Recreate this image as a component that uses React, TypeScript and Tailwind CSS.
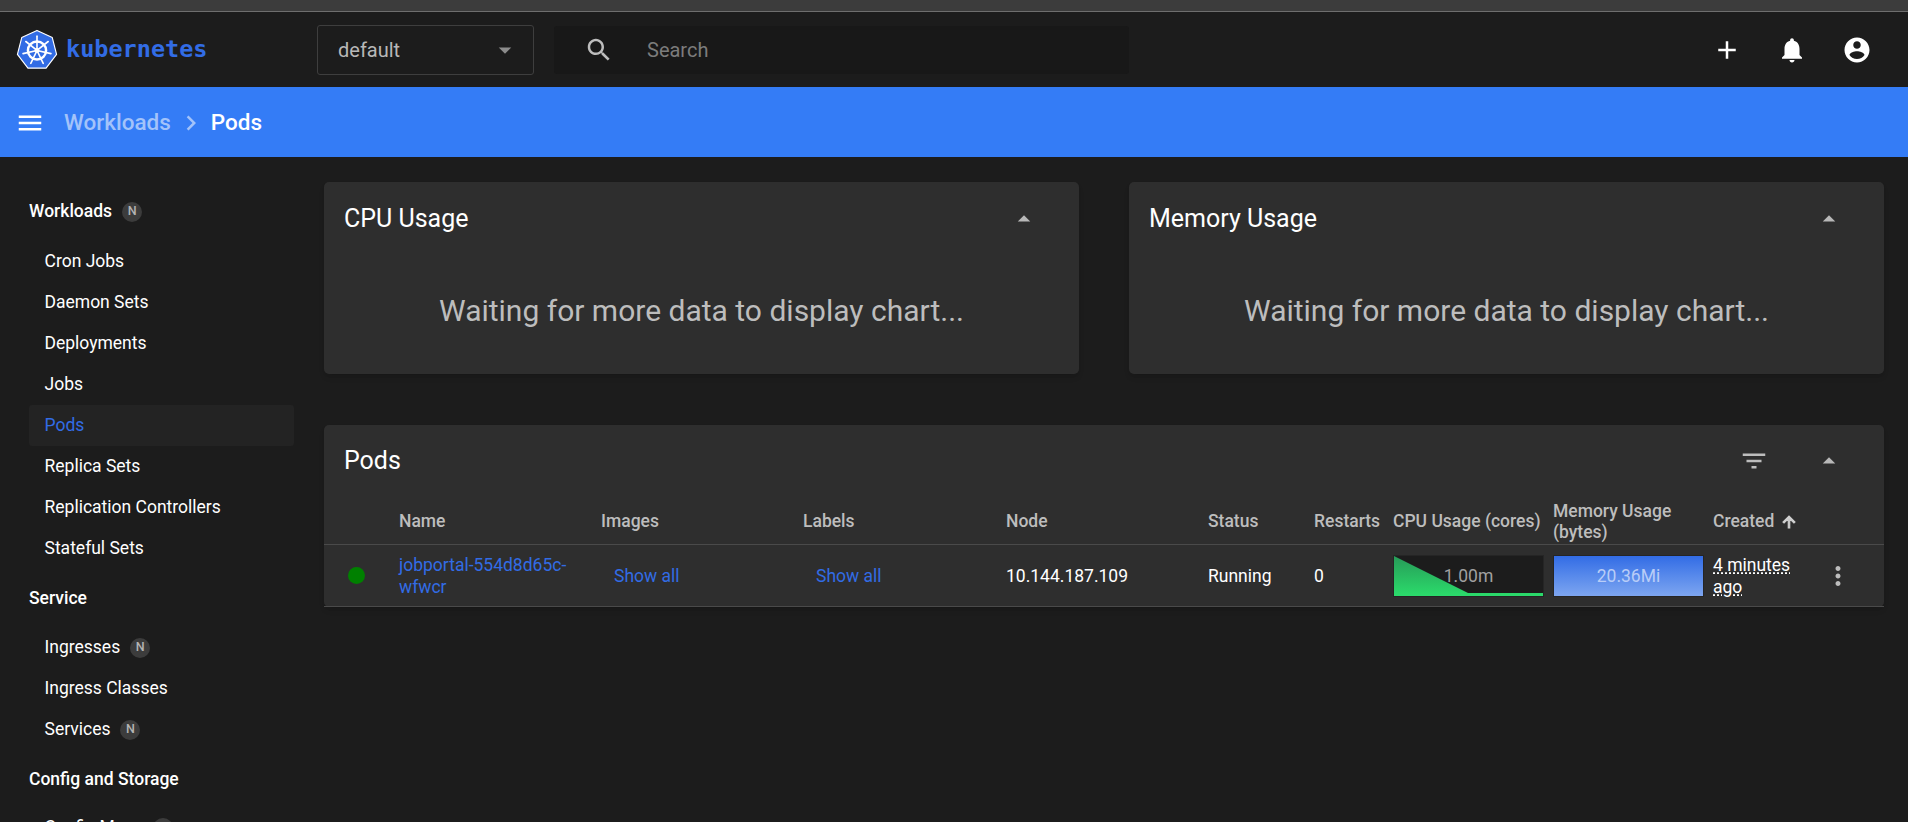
const ICONS = {
  add: "M19 13h-6v6h-2v-6H5v-2h6V5h2v6h6v2z",
  bell: "M12 22c1.1 0 2-.9 2-2h-4c0 1.1.89 2 2 2zm6-6v-5c0-3.07-1.64-5.64-4.5-6.32V4c0-.83-.67-1.5-1.5-1.5s-1.5.67-1.5 1.5v.68C7.63 5.36 6 7.92 6 11v5l-2 2v1h16v-1l-2-2z",
  account: "M12 2C6.48 2 2 6.48 2 12s4.48 10 10 10 10-4.48 10-10S17.52 2 12 2zm0 3c1.66 0 3 1.34 3 3s-1.34 3-3 3-3-1.34-3-3 1.34-3 3-3zm0 14.2c-2.5 0-4.71-1.28-6-3.22.03-1.99 4-3.08 6-3.08 1.99 0 5.97 1.09 6 3.08-1.29 1.94-3.5 3.22-6 3.22z",
  search: "M15.5 14h-.79l-.28-.27C15.41 12.59 16 11.11 16 9.5 16 5.91 13.09 3 9.5 3S3 5.91 3 9.5 5.91 16 9.5 16c1.61 0 3.09-.59 4.23-1.57l.27.28v.79l5 4.99L20.49 19l-4.99-5zm-6 0C7.01 14 5 11.99 5 9.5S7.01 5 9.5 5 14 7.01 14 9.5 11.99 14 9.5 14z",
  menu: "M3 18h18v-2H3v2zm0-5h18v-2H3v2zm0-7v2h18V6H3z",
  filter: "M10 18h4v-2h-4v2zM3 6v2h18V6H3zm3 7h12v-2H6v2z",
  more: "M12 8c1.1 0 2-.9 2-2s-.9-2-2-2-2 .9-2 2 .9 2 2 2zm0 2c-1.1 0-2 .9-2 2s.9 2 2 2 2-.9 2-2-.9-2-2-2zm0 6c-1.1 0-2 .9-2 2s.9 2 2 2 2-.9 2-2-.9-2-2-2z",
  dropUp: "M7 14l5-5 5 5z",
  dropDown: "M7 10l5 5 5-5z",
  arrowUp: "M4 12l1.41 1.41L11 7.83V20h2V7.83l5.58 5.59L20 12l-8-8-8 8z",
  chevron: "M10 6L8.59 7.41 13.17 12l-4.58 4.59L10 18l6-6z",
};

const Icon = ({ d, className }: { d: string; className: string }) => (
  <svg viewBox="0 0 24 24" fill="currentColor" className={className}>
    <path d={d} />
  </svg>
);

const KubeLogo = () => (
  <svg viewBox="0 0 44 44" className="w-[44px] h-[42px] shrink-0">
    <polygon
      points="22,1.5 38,9 42.5,26.5 31.5,41 12.5,41 1.5,26.5 6,9"
      fill="#326ce5"
      stroke="#ffffff"
      strokeWidth="1.2"
      strokeLinejoin="round"
    />
    <g stroke="#ffffff" fill="none">
      <circle cx="22" cy="22.5" r="9.5" strokeWidth="2.6" />
      <circle cx="22" cy="22.5" r="2.6" fill="#ffffff" strokeWidth="0" />
      {/* seven spokes, one toward each corner */}
      <g strokeWidth="1.7" strokeLinecap="round">
        <line x1="22" y1="22.5" x2="22" y2="7.5" />
        <line x1="22" y1="22.5" x2="33.7" y2="13.1" />
        <line x1="22" y1="22.5" x2="36.6" y2="25.8" />
        <line x1="22" y1="22.5" x2="28.5" y2="36" />
        <line x1="22" y1="22.5" x2="15.5" y2="36" />
        <line x1="22" y1="22.5" x2="7.4" y2="25.8" />
        <line x1="22" y1="22.5" x2="10.3" y2="13.1" />
      </g>
    </g>
  </svg>
);

const Badge = () => (
  <span className="ml-[10px] w-[20px] h-[20px] rounded-full bg-[#3c3c3c] text-[#b4b4b4] text-[12.5px] font-medium flex items-center justify-center">
    N
  </span>
);

const Heading = ({ label, ns, className }: { label: string; ns?: boolean; className: string }) => (
  <div className={`h-[41px] flex items-center text-[17.5px] font-medium text-white ${className}`}>
    {label}
    {ns && <Badge />}
  </div>
);

const Item = ({ label, ns, active }: { label: string; ns?: boolean; active?: boolean }) => (
  <div
    className={`h-[41px] pl-[15.5px] rounded-[3px] flex items-center text-[17.5px] ${
      active ? "bg-[#232323] text-[#326ce5]" : "text-white"
    }`}
  >
    {label}
    {ns && <Badge />}
  </div>
);

const Sidebar = () => (
  <aside className="w-[300px] shrink-0 pl-[29px] pr-[6px] pt-[34px]">
    <Heading label="Workloads" ns className="mb-[9px]" />
    <Item label="Cron Jobs" />
    <Item label="Daemon Sets" />
    <Item label="Deployments" />
    <Item label="Jobs" />
    <Item label="Pods" active />
    <Item label="Replica Sets" />
    <Item label="Replication Controllers" />
    <Item label="Stateful Sets" />
    <Heading label="Service" className="mt-[9px] mb-[8px]" />
    <Item label="Ingresses" ns />
    <Item label="Ingress Classes" />
    <Item label="Services" ns />
    <Heading label="Config and Storage" className="mt-[9px] mb-[7px]" />
    <Item label="Config Maps" ns />
  </aside>
);

const ChartCard = ({ title }: { title: string }) => (
  <section className="flex-1 h-[192px] rounded-[5px] bg-[#2e2e2e] shadow-md">
    <div className="h-[74px] pl-[20px] pr-[40px] flex items-center justify-between">
      <h2 className="text-[25px] text-white">{title}</h2>
      <Icon d={ICONS.dropUp} className="w-[30px] h-[30px] text-[#b8b8b8]" />
    </div>
    <p className="pt-[32px] text-center text-[30px] text-[#bdbdbd]">Waiting for more data to display chart...</p>
  </section>
);

const COLUMNS = "grid grid-cols-[75px_202px_202px_203px_202px_106px_79px_160px_160px_1fr]";

const Spark = ({ children, text, kind }: { children: React.ReactNode; text: string; kind: "cpu" | "mem" }) => (
  <div className="relative w-[151px] h-[42px] bg-[#1c1c1c] border border-[#252525]">
    {children}
    <span
      className={`absolute inset-0 flex items-center justify-center text-[17.5px] ${
        kind === "cpu" ? "text-[#a0a0a0]" : "text-[#b9cdf7]"
      }`}
    >
      {text}
    </span>
  </div>
);

const PodsCard = () => (
  <section className="mt-[51px] rounded-[5px] bg-[#2e2e2e] shadow-md">
    <div className="h-[72px] pl-[20px] pr-[40px] flex items-center justify-between">
      <h2 className="text-[25px] text-white">Pods</h2>
      <div className="flex items-center gap-[45px]">
        <Icon d={ICONS.filter} className="w-[30px] h-[30px] text-[#bdbdbd]" />
        <Icon d={ICONS.dropUp} className="w-[30px] h-[30px] text-[#b8b8b8]" />
      </div>
    </div>
    <div className={`${COLUMNS} h-[48px] pt-[2px] items-center border-b border-[#4a4a4a] text-[17.5px] leading-[21px] font-medium text-[#bdbdbd]`}>
      <div />
      <div>Name</div>
      <div>Images</div>
      <div>Labels</div>
      <div>Node</div>
      <div>Status</div>
      <div>Restarts</div>
      <div className="whitespace-nowrap">CPU Usage (cores)</div>
      <div>
        Memory Usage
        <br />
        (bytes)
      </div>
      <div className="flex items-center gap-[6px]">
        Created
        <Icon d={ICONS.arrowUp} className="w-[18px] h-[18px] text-[#d0d0d0] stroke-current stroke-[1.5]" />
      </div>
    </div>
    <div className={`${COLUMNS} h-[62px] items-center border-b border-[#4a4a4a] text-[17.5px] leading-[22px] text-white`}>
      <div className="pl-[24px]">
        <div className="w-[17px] h-[17px] rounded-full bg-[#008000]" />
      </div>
      <div className="text-[#326ce5] pr-[10px]">jobportal-554d8d65c-wfwcr</div>
      <div className="pl-[13px] text-[#326ce5]">Show all</div>
      <div className="pl-[13px] text-[#326ce5]">Show all</div>
      <div>10.144.187.109</div>
      <div>Running</div>
      <div>0</div>
      <Spark text="1.00m" kind="cpu">
        <svg viewBox="0 0 149 40" preserveAspectRatio="none" className="absolute inset-0 w-full h-full">
          <defs>
            <linearGradient id="cpuFill" x1="0" y1="0" x2="0" y2="1">
              <stop offset="0" stopColor="#279a58" />
              <stop offset="1" stopColor="#2bdc6b" />
            </linearGradient>
          </defs>
          <path d="M0 0 L74 37 L149 37 L149 40 L0 40 Z" fill="url(#cpuFill)" />
        </svg>
      </Spark>
      <Spark text="20.36Mi" kind="mem">
        <div className="absolute inset-0 bg-gradient-to-b from-[#326ce5] to-[#7da5f0]" />
      </Spark>
      <div className="flex items-center">
        <div className="w-[80px] leading-[22px]">
          <span className="underline decoration-dotted underline-offset-2">4 minutes ago</span>
        </div>
        <Icon d={ICONS.more} className="ml-[30px] w-[30px] h-[30px] text-[#bdbdbd]" />
      </div>
    </div>
  </section>
);

export default function App() {
  return (
    <div className="h-screen overflow-hidden bg-[#1c1c1c] font-['Roboto',sans-serif] flex flex-col">
      <div className="h-[12px] shrink-0 bg-[#3c3c3c] border-b border-[#6e6e6e]" />

      <header className="h-[75px] shrink-0 flex items-center pl-[15px] pr-[36px]">
        <KubeLogo />
        <span className="ml-[7px] w-[251px] text-[23.5px] font-semibold font-['DejaVu_Sans_Mono',monospace] text-[#326ce5]">kubernetes</span>
        <div className="w-[217px] h-[50px] pl-[20px] pr-[13px] flex items-center justify-between border border-[#3e3e3e] rounded-[3px] text-[20px] text-[#b8b8b8]">
          default
          <Icon d={ICONS.dropDown} className="w-[30px] h-[30px] text-[#8c8c8c]" />
        </div>
        <div className="ml-[20px] w-[575px] h-[48px] pl-[30px] flex items-center rounded-[3px] bg-[#181818]">
          <Icon d={ICONS.search} className="w-[30px] h-[30px] text-[#bdbdbd]" />
          <span className="ml-[33px] text-[20px] text-[#7c7c7c]">Search</span>
        </div>
        <div className="ml-auto flex items-center gap-[35px] text-white">
          <Icon d={ICONS.add} className="w-[30px] h-[30px]" />
          <Icon d={ICONS.bell} className="w-[30px] h-[30px]" />
          <Icon d={ICONS.account} className="w-[30px] h-[30px]" />
        </div>
      </header>

      <div className="h-[70px] shrink-0 bg-[#347cf6] flex items-center pl-[15px] pt-[1px] text-[22.5px] font-medium">
        <Icon d={ICONS.menu} className="w-[30px] h-[30px] text-white" />
        <span className="ml-[19px] text-[#a3c3fa]">Workloads</span>
        <Icon d={ICONS.chevron} className="mx-[5px] w-[30px] h-[30px] text-[#a3c3fa]" />
        <span className="text-white">Pods</span>
      </div>

      <div className="flex-1 min-h-0 flex">
        <Sidebar />
        <main className="flex-1 px-[24px] pt-[25px]">
          <div className="flex gap-[50px]">
            <ChartCard title="CPU Usage" />
            <ChartCard title="Memory Usage" />
          </div>
          <PodsCard />
        </main>
      </div>
    </div>
  );
}
